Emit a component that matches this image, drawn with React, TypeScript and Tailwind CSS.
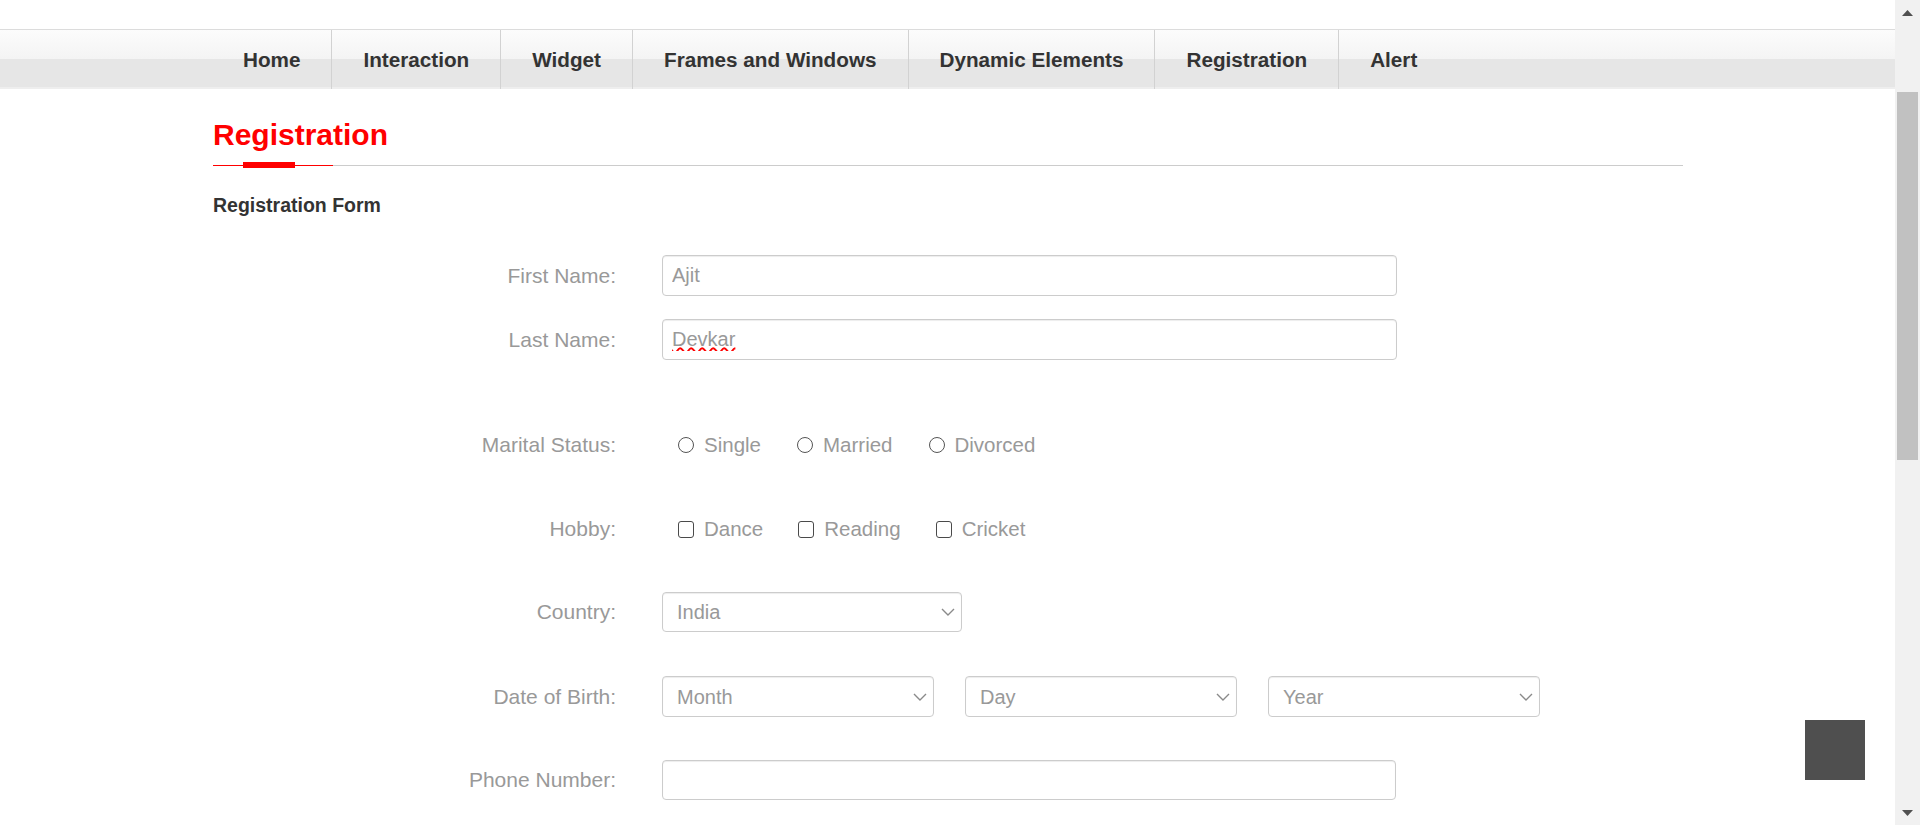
import React from "react";

const navItems = [
  "Home",
  "Interaction",
  "Widget",
  "Frames and Windows",
  "Dynamic Elements",
  "Registration",
  "Alert",
];

function Chevron() {
  return (
    <svg width="14" height="8" viewBox="0 0 14 8" fill="none">
      <polyline points="1,1 7,7 13,1" stroke="#8a8a8a" strokeWidth="1.4" />
    </svg>
  );
}

interface RowProps {
  label: string;
  className: string;
  children: React.ReactNode;
}

function Row({ label, className, children }: RowProps) {
  return (
    <div className={`flex items-center ${className}`}>
      <div className="w-[403px] text-right text-[21px] text-[#999]">{label}</div>
      <div className="ml-[46px] flex items-center">{children}</div>
    </div>
  );
}

function FakeSelect({ value, width }: { value: string; width: string }) {
  return (
    <div
      className={`${width} flex h-full items-center justify-between rounded-[4px] border border-[#ccc] bg-white pl-[14px] pr-[6px] text-[20px] text-[#999] shadow-[inset_0_1px_1px_rgba(0,0,0,0.075)]`}
    >
      <span>{value}</span>
      <Chevron />
    </div>
  );
}

function Radio({ label }: { label: string }) {
  return (
    <label className="flex items-center gap-[10px]">
      <span className="h-[16px] w-[16px] rounded-full border border-[#555] bg-white" />
      <span className="text-[20.5px] text-[#999]">{label}</span>
    </label>
  );
}

function Check({ label }: { label: string }) {
  return (
    <label className="flex items-center gap-[10px]">
      <span className="h-[17px] w-[16px] rounded-[3px] border border-[#4a4a4a] bg-white" />
      <span className="text-[20.5px] text-[#999]">{label}</span>
    </label>
  );
}

export default function App() {
  return (
    <div className="flex h-[825px] overflow-hidden bg-white font-['Liberation_Sans',Arial,sans-serif]">
      <div className="flex-1">
        <div className="h-[29px] bg-white" />
        <nav className="flex h-[60px] border-t border-[#dcdcdc] bg-[linear-gradient(to_bottom,#fcfcfc_0%,#f4f4f4_49%,#e6e6e6_49%,#e6e6e6_97%,#eeeeee_97%)] pl-[212px]">
          {navItems.map((item, i) => (
            <div
              key={item}
              className={`flex items-center px-[31px] text-[20.7px] font-bold text-[#333] ${
                i < navItems.length - 1 ? "border-r border-[#d2d2d2]" : ""
              }`}
            >
              {item}
            </div>
          ))}
        </nav>

        <div className="ml-[213px] w-[1470px]">
          <h1 className="mt-[29px] text-[30px] font-bold leading-[33px] text-[#ff0000]">
            Registration
          </h1>
          <div className="mt-[11px] flex h-[6px] items-center">
            <div className="h-px w-[30px] bg-[#ff0000]" />
            <div className="h-[6px] w-[52px] bg-[#ff0000]" />
            <div className="h-px w-[38px] bg-[#ff0000]" />
            <div className="h-px flex-1 bg-[#ccc]" />
          </div>
          <h2 className="mt-[26px] text-[19.5px] font-bold leading-[22px] text-[#333]">
            Registration Form
          </h2>

          <Row label="First Name:" className="mt-[39px] h-[41px]">
            <input
              readOnly
              defaultValue="Ajit"
              className="h-[41px] w-[735px] rounded-[4px] border border-[#ccc] px-[9px] text-[20px] text-[#999] shadow-[inset_0_1px_1px_rgba(0,0,0,0.075)] outline-none"
            />
          </Row>
          <Row label="Last Name:" className="mt-[23px] h-[41px]">
            <input
              readOnly
              defaultValue="Devkar"
              className="h-[41px] w-[735px] rounded-[4px] border border-[#ccc] px-[9px] text-[20px] text-[#999] underline decoration-wavy decoration-[#ff0000] shadow-[inset_0_1px_1px_rgba(0,0,0,0.075)] outline-none"
            />
          </Row>

          <Row label="Marital Status:" className="mt-[65px] h-[40px]">
            <div className="ml-[16px] flex items-center gap-[36px]">
              <Radio label="Single" />
              <Radio label="Married" />
              <Radio label="Divorced" />
            </div>
          </Row>

          <Row label="Hobby:" className="mt-[44px] h-[40px]">
            <div className="ml-[16px] flex items-center gap-[35px]">
              <Check label="Dance" />
              <Check label="Reading" />
              <Check label="Cricket" />
            </div>
          </Row>

          <Row label="Country:" className="mt-[43px] h-[40px]">
            <div className="h-[40px]">
              <FakeSelect value="India" width="w-[300px]" />
            </div>
          </Row>

          <Row label="Date of Birth:" className="mt-[44px] h-[41px]">
            <div className="flex h-[41px] gap-[31px]">
              <FakeSelect value="Month" width="w-[272px]" />
              <FakeSelect value="Day" width="w-[272px]" />
              <FakeSelect value="Year" width="w-[272px]" />
            </div>
          </Row>

          <Row label="Phone Number:" className="mt-[43px] h-[40px]">
            <input
              readOnly
              className="h-[40px] w-[734px] rounded-[4px] border border-[#ccc] px-[9px] text-[20px] text-[#999] shadow-[inset_0_1px_1px_rgba(0,0,0,0.075)] outline-none"
            />
          </Row>
        </div>

        <div className="fixed bottom-[45px] right-[55px] h-[60px] w-[60px] bg-[#4f4f4f]" />
      </div>

      <div className="flex w-[25px] flex-col items-center bg-[#f1f1f1]">
        <div className="flex h-[25px] items-center justify-center">
          <svg width="11" height="6" viewBox="0 0 11 6">
            <polygon points="5.5,0 11,6 0,6" fill="#505050" />
          </svg>
        </div>
        <div className="mt-[67px] h-[368px] w-[21px] bg-[#c1c1c1]" />
        <div className="flex-1" />
        <div className="flex h-[25px] items-center justify-center">
          <svg width="11" height="6" viewBox="0 0 11 6">
            <polygon points="0,0 11,0 5.5,6" fill="#505050" />
          </svg>
        </div>
      </div>
    </div>
  );
}
